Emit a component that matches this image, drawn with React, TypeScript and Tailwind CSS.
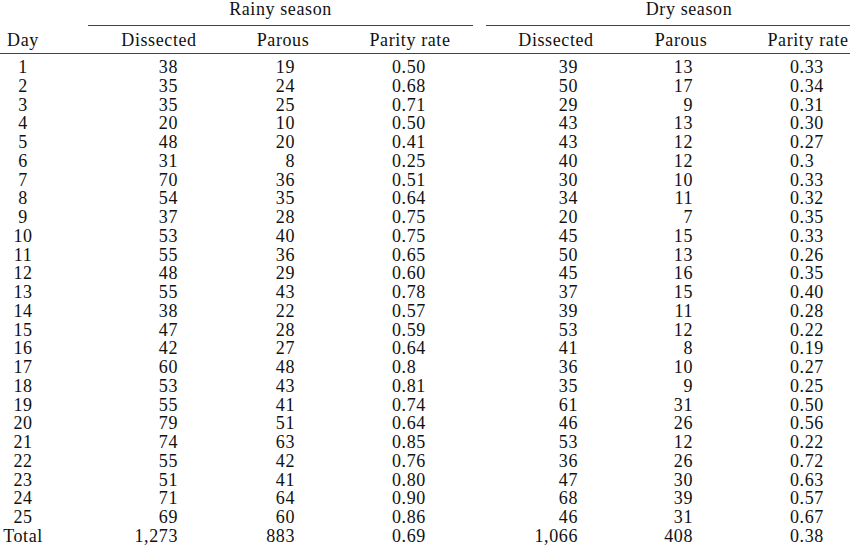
const rows: [string, string, string, string, string, string, string][] = [
  ["1", "38", "19", "0.50", "39", "13", "0.33"],
  ["2", "35", "24", "0.68", "50", "17", "0.34"],
  ["3", "35", "25", "0.71", "29", "9", "0.31"],
  ["4", "20", "10", "0.50", "43", "13", "0.30"],
  ["5", "48", "20", "0.41", "43", "12", "0.27"],
  ["6", "31", "8", "0.25", "40", "12", "0.3"],
  ["7", "70", "36", "0.51", "30", "10", "0.33"],
  ["8", "54", "35", "0.64", "34", "11", "0.32"],
  ["9", "37", "28", "0.75", "20", "7", "0.35"],
  ["10", "53", "40", "0.75", "45", "15", "0.33"],
  ["11", "55", "36", "0.65", "50", "13", "0.26"],
  ["12", "48", "29", "0.60", "45", "16", "0.35"],
  ["13", "55", "43", "0.78", "37", "15", "0.40"],
  ["14", "38", "22", "0.57", "39", "11", "0.28"],
  ["15", "47", "28", "0.59", "53", "12", "0.22"],
  ["16", "42", "27", "0.64", "41", "8", "0.19"],
  ["17", "60", "48", "0.8", "36", "10", "0.27"],
  ["18", "53", "43", "0.81", "35", "9", "0.25"],
  ["19", "55", "41", "0.74", "61", "31", "0.50"],
  ["20", "79", "51", "0.64", "46", "26", "0.56"],
  ["21", "74", "63", "0.85", "53", "12", "0.22"],
  ["22", "55", "42", "0.76", "36", "26", "0.72"],
  ["23", "51", "41", "0.80", "47", "30", "0.63"],
  ["24", "71", "64", "0.90", "68", "39", "0.57"],
  ["25", "69", "60", "0.86", "46", "31", "0.67"],
  ["Total", "1,273", "883", "0.69", "1,066", "408", "0.38"],
];

export default function App() {
  return (
    <div className="w-[850px] h-[547px] overflow-hidden bg-white text-[#111] font-['Liberation_Serif',serif] text-[18px] tracking-[0.6px]">
      {/* season groups */}
      <div className="flex h-[26px] pt-[1px]">
        <div className="ml-[88px] w-[385px] border-b border-[#444] text-center leading-[17px]">Rainy season</div>
        <div className="ml-[13px] flex-1 border-b border-[#444] pl-[42px] text-center leading-[17px]">Dry season</div>
      </div>

      {/* column headings */}
      <div className="flex h-[28px] items-end border-b border-[#444] pb-[4px] leading-[18px]">
        <div className="w-[46px] text-center">Day</div>
        <div className="ml-[63px] w-[100px] text-center">Dissected</div>
        <div className="ml-[24px] w-[100px] text-center">Parous</div>
        <div className="ml-[27px] w-[100px] text-center whitespace-nowrap">Parity rate</div>
        <div className="ml-[46px] w-[100px] text-center">Dissected</div>
        <div className="ml-[25px] w-[100px] text-center">Parous</div>
        <div className="ml-[35px] w-[84px] text-center whitespace-nowrap">Parity rate</div>
      </div>

      <div className="pt-[4px]">
        {rows.map((r) => (
          <div key={r[0]} className="flex h-[18.75px] leading-[18.75px]">
            <div className="w-[46px] text-center">{r[0]}</div>
            <div className="w-[132px] text-right">{r[1]}</div>
            <div className="w-[117px] text-right">{r[2]}</div>
            <div className="w-[195px] pl-[97px]">{r[3]}</div>
            <div className="w-[88px] text-right">{r[4]}</div>
            <div className="w-[115px] text-right">{r[5]}</div>
            <div className="flex-1 pl-[97px]">{r[6]}</div>
          </div>
        ))}
      </div>
    </div>
  );
}
